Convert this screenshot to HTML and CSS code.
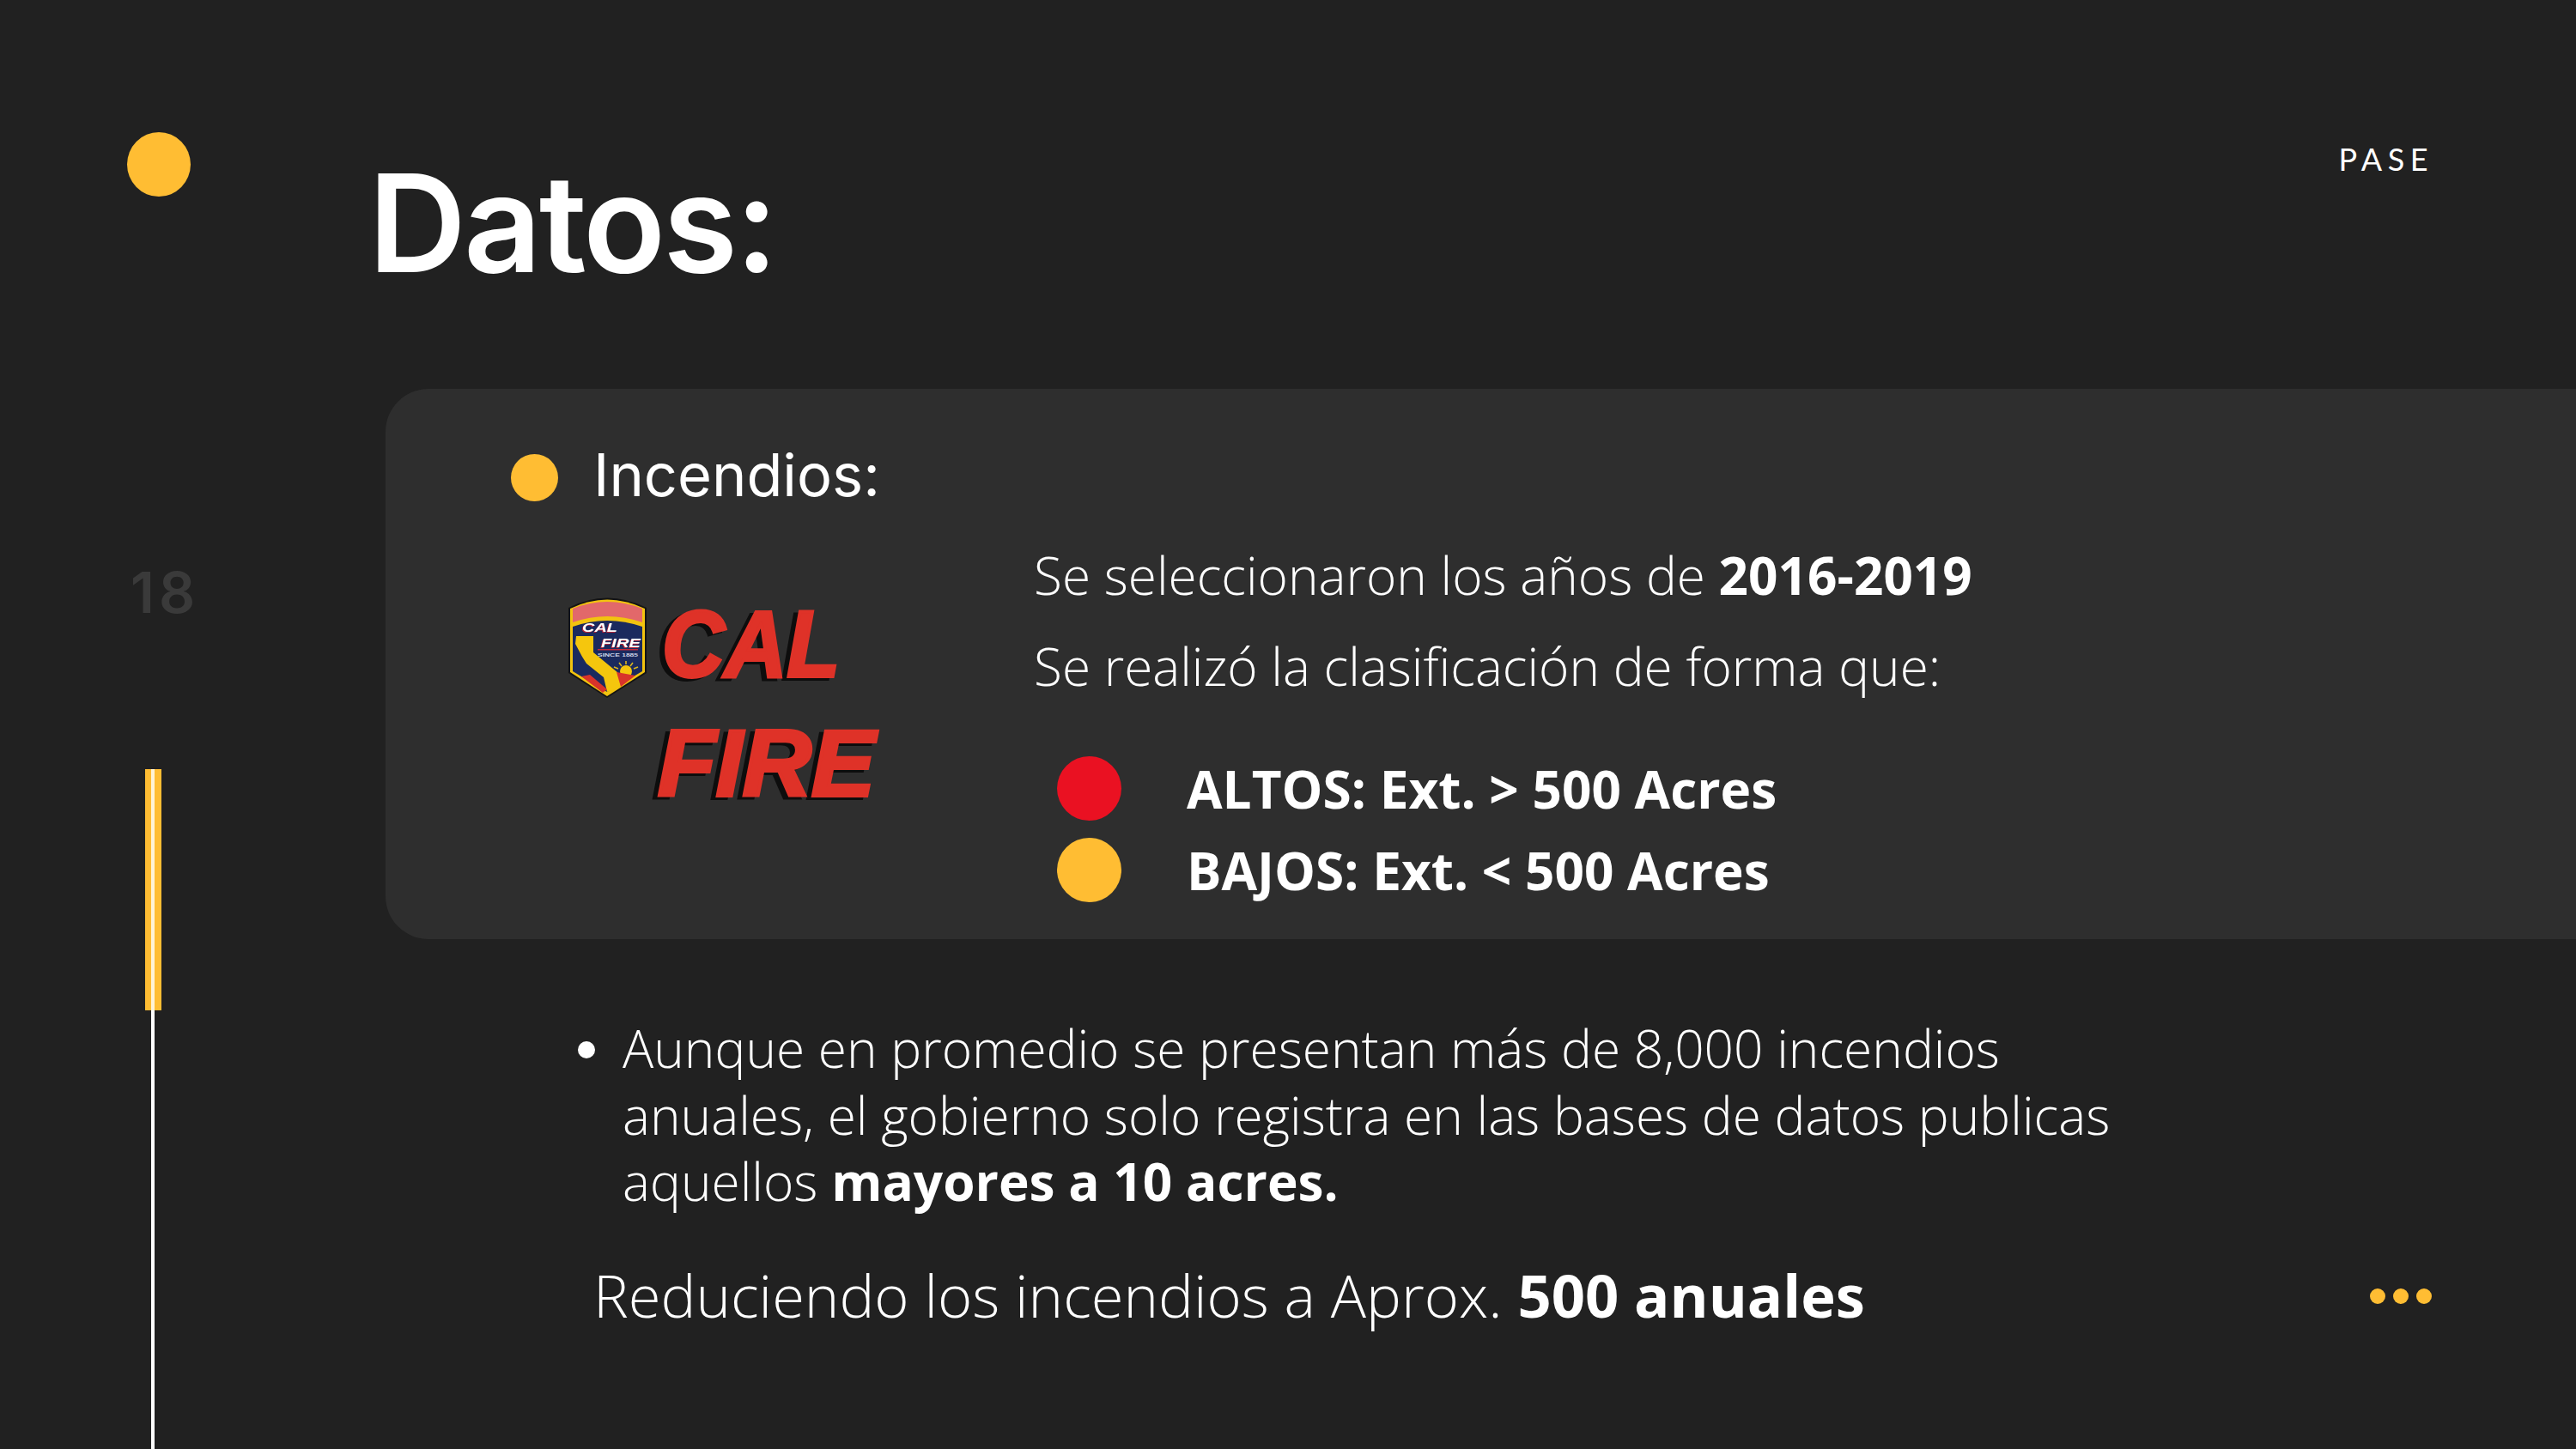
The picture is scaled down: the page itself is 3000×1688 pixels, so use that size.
FILE: index.html
```html
<!DOCTYPE html>
<html lang="es">
<head>
<meta charset="utf-8">
<title>Datos</title>
<link rel="stylesheet" href="styles.css">
</head>
<body>
<div class="slide">
  <aside class="rail">
    <span class="dot rail-dot"></span>
    <span class="page-no">18</span>
    <div class="track"><span class="track-fill"></span></div>
  </aside>
  <main class="main">
    <header class="head">
      <h1 class="title">Datos:</h1>
      <span class="pase">PASE</span>
    </header>
    <section class="card">
      <div class="card-head">
        <span class="dot card-dot"></span>
        <h2 class="card-title">Incendios:</h2>
      </div>
      <div class="card-body">
        <svg class="logo" viewBox="0 0 420 300" role="img" aria-label="CAL FIRE">
          <path d="M32 38 Q77 15 123 38 L123 114 L77 143 L32 114 Z" fill="#141414"/>
          <path d="M34 39 Q77 18 121 39 L121 113 L77 141 L34 113 Z" fill="#f2c30f"/>
          <path d="M37 39 Q77 23 118 39 L118 55 Q77 41 37 55 Z" fill="#e2686a"/>
          <path d="M37 60 Q77 46 118 60 L118 112 L77 136 L37 112 Z" fill="#1b2a5e"/>
          <text class="shield-text" x="48" y="66" textLength="41" lengthAdjust="spacingAndGlyphs">CAL</text>
          <text class="shield-text" x="70" y="84" textLength="46" lengthAdjust="spacingAndGlyphs">FIRE</text>
          <rect x="66" y="86" width="47" height="1.5" fill="#c4283a"/>
          <text class="shield-small" x="66" y="95" textLength="47" lengthAdjust="spacingAndGlyphs">SINCE 1885</text>
          <path d="M41 71 L61 71 L61 90 L90 114 L100 124 L90 131 L77 136 L73 119 L53 103 L48 95 L40 80 Z" fill="#f5c60d"/>
          <circle cx="99" cy="112" r="7" fill="#f5c60d"/>
          <path d="M99 100 V104 M91 102 L94 106 M107 102 L104 106 M85 107 L90 109 M113 107 L108 109" stroke="#d9b520" stroke-width="1.6"/>
          <path d="M47 118 L57 116 L77 133 L72 137 Z M88 113 L110 117 L93 130 Z" fill="#d8332b"/>
          <text class="logo-text" x="141" y="118" textLength="207" lengthAdjust="spacingAndGlyphs">CAL</text>
          <text class="logo-text" x="136" y="257" textLength="253" lengthAdjust="spacingAndGlyphs">FIRE</text>
        </svg>
        <div class="facts">
          <p class="fact">Se seleccionaron los años de <b>2016-2019</b></p>
          <p class="fact fact-second">Se realizó la clasificación de forma que:</p>
          <ul class="legend">
            <li class="legend-row"><span class="dot legend-dot red"></span><b>ALTOS: Ext. &gt; 500 Acres</b></li>
            <li class="legend-row"><span class="dot legend-dot"></span><b>BAJOS: Ext. &lt; 500 Acres</b></li>
          </ul>
        </div>
      </div>
    </section>
    <ul class="notes">
      <li>Aunque en promedio se presentan más de 8,000 incendios anuales, el gobierno solo registra en las bases de datos publicas aquellos <b>mayores a 10 acres.</b></li>
    </ul>
    <div class="closing">
      <p class="closing-text">Reduciendo los incendios a Aprox. <b>500 anuales</b></p>
      <div class="more"><span class="dot more-dot"></span><span class="dot more-dot"></span><span class="dot more-dot"></span></div>
    </div>
  </main>
</div>
</body>
</html>
```

FILE: styles.css
```css
* { box-sizing: border-box; }
html, body { margin: 0; padding: 0; }
body { width: 3000px; height: 1688px; overflow: hidden; background: #212121; color: #fff; font-family: "Open Sans", sans-serif; }
p, h1, h2, ul { margin: 0; padding: 0; }
ul { list-style: none; }
b { font-weight: 700; }
.slide { display: grid; grid-template-columns: 449px 1fr; width: 3000px; height: 1688px; }
.dot { display: block; flex: none; border-radius: 50%; background: #ffbd33; }

.rail { display: flex; flex-direction: column; align-items: flex-start; height: 1688px; padding: 154px 0 0 148px; }
.rail-dot { width: 74px; height: 75px; }
.page-no { margin: 422px 0 0 4px; font: 600 66px/78px Inter, sans-serif; color: #3a3a3a; letter-spacing: 5px; }
.track { position: relative; flex: 1; width: 4px; margin: 167px 0 0 28px; background: #fff; }
.track-fill { position: absolute; top: 0; left: -7px; width: 19px; height: 281px; background: linear-gradient(90deg, #ffbd33 0 7px, #fff3d6 7px 11px, #ffbd33 11px); }

.main { display: flex; flex-direction: column; min-width: 0; }
.head { display: flex; justify-content: space-between; align-items: flex-start; height: 453px; padding: 164px 166px 0 0; }
.title { margin-left: -20px; font: 600 158px/192px Inter, sans-serif; letter-spacing: -3px; }
.pase { margin-top: 0; font: 400 36px/42px Lato, sans-serif; letter-spacing: 6.5px; }

.card { display: flex; flex-direction: column; height: 641px; padding: 58px 0 0 146px; background: #2e2e2e; border-radius: 50px 0 0 50px; }
.card-head { display: flex; align-items: center; gap: 41px; height: 90px; }
.card-dot { width: 55px; height: 55px; }
.card-title { margin-top: -5px; font: 400 68.5px/90px Inter, sans-serif; }
.card-body { display: flex; }
.logo { flex: none; width: 420px; height: 300px; margin: 69px 0 0 35px; }
.shield-text { font: italic 700 15.5px "Liberation Sans", sans-serif; fill: #fff; filter: drop-shadow(-1px 1px 0 #b5263a); }
.shield-small { font: 700 6px "Liberation Sans", sans-serif; fill: #cfd5e6; }
.logo-text { font: italic 700 110px "Liberation Sans", sans-serif; fill: #df3228; stroke: #df3228; stroke-width: 4px; filter: drop-shadow(-6px 3px 0 #0d0d0d); }
.facts { margin: 27px 0 0 154px; }
.fact { font-weight: 300; font-size: 60.3px; line-height: 84px; white-space: nowrap; }
.fact-second { margin-top: 22px; }
.legend { margin-top: 53px; padding-left: 27px; }
.legend-row { display: flex; align-items: center; gap: 76px; height: 95px; font-size: 60.3px; }
.legend-dot { width: 75px; height: 75px; }
.red { background: #ea1122; }

.notes { margin: 88px 0 0 276px; width: 1760px; font-weight: 300; font-size: 60.35px; line-height: 77.5px; }
.notes li { position: relative; }
.notes li::before { content: ""; position: absolute; left: -52px; top: 31px; width: 20px; height: 20px; border-radius: 50%; background: #fff; }
.closing { display: flex; align-items: center; justify-content: space-between; margin: 47px 0 0 242px; padding-right: 168px; width: calc(100% - 242px); }
.closing-text { font-weight: 300; font-size: 68.7px; line-height: 94px; white-space: nowrap; }
.more { display: flex; gap: 9px; margin-top: 2px; }
.more-dot { width: 18px; height: 18px; }
```
